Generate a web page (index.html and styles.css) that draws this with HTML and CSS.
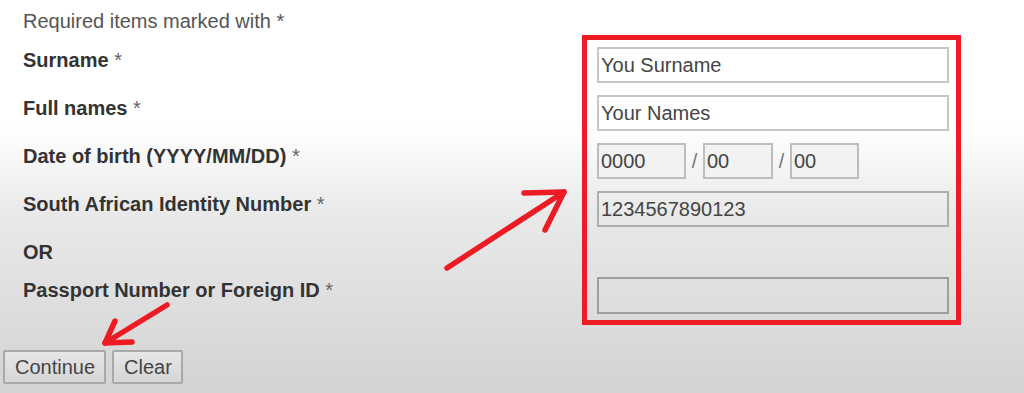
FILE: index.html
```html
<!DOCTYPE html>
<html lang="en">

<head>
  <meta charset="UTF-8" />
  <title>Personal Details</title>
  <meta name="viewport" content="width=device-width, initial-scale=1.0" />
  <link rel="stylesheet" href="styles.css">
</head>

<body>

  <p class="note">Required items marked with *</p>

  <form class="details" onsubmit="return false">
    <div class="labels">
      <label class="label" for="surname">Surname <span class="req">*</span></label>
      <label class="label" for="names">Full names <span class="req">*</span></label>
      <label class="label" for="dob-y">Date of birth (YYYY/MM/DD) <span class="req">*</span></label>
      <label class="label" for="idnum">South African Identity Number <span class="req">*</span></label>
      <div class="label label-or">OR</div>
      <label class="label label-passport" for="passport">Passport Number or Foreign ID <span class="req">*</span></label>
    </div>

    <!-- highlighted input column -->
    <div class="fields">
      <input class="field" id="surname" type="text" value="You Surname">
      <input class="field" id="names" type="text" value="Your Names">
      <div class="dob">
        <input class="field field-year" id="dob-y" type="text" value="0000">
        <span class="slash">/</span>
        <input class="field field-month" type="text" value="00">
        <span class="slash">/</span>
        <input class="field field-day" type="text" value="00">
      </div>
      <input class="field field-grey" id="idnum" type="text" value="1234567890123">
      <input class="field field-grey field-passport" id="passport" type="text" disabled>
    </div>
  </form>

  <div class="actions">
    <button class="btn" type="button">Continue</button>
    <button class="btn" type="button">Clear</button>
  </div>

  <!-- hand-drawn annotation arrows -->
  <svg class="marks" width="1024" height="393" viewBox="0 0 1024 393">
    <g fill="none" stroke="#ed1c24" stroke-width="5.5" stroke-linecap="round" stroke-linejoin="round">
      <path d="M447 268 L564 192" />
      <path d="M524 193 L564 192 L545 230" />
      <path d="M167 305 L105 343" />
      <path d="M115 321 L105 343 L132 342" />
    </g>
  </svg>

</body>

</html>
```

FILE: styles.css
```css
/* ─── BASE ───────────────────────────────────────────────────────── */
* {
  box-sizing: border-box;
  margin: 0;
  padding: 0;
}

html,
body {
  height: 100%;
  overflow: hidden;
}

body {
  position: relative;
  font-family: "Liberation Sans", Arial, sans-serif;
  font-size: 20px;
  line-height: 24px;
  color: #333;
  background: linear-gradient(to bottom, #fff 0, #fff 125px, #e9e9e9 215px, #d3d3d3 393px);
}

.note {
  padding: 9px 0 0 23px;
  color: #555;
}

/* ─── FORM ───────────────────────────────────────────────────────── */
.details {
  display: flex;
  margin-top: 2px;
}

.labels {
  width: 582px;
  padding: 12px 0 0 23px;
  display: flex;
  flex-direction: column;
  gap: 12px;
}

.label {
  display: block;
  height: 36px;
  padding-top: 1px;
  font-weight: bold;
  color: #333;
}

.label-or {
  height: 26px;
}

.label-passport {
  height: 37px;
}

.req {
  font-weight: normal;
  color: #666;
}

/* ─── FIELDS ─────────────────────────────────────────────────────── */
.fields {
  width: 379px;
  border: 5px solid #ed1c24;
  padding: 7px 7px 6px 10px;
  display: flex;
  flex-direction: column;
  gap: 12px;
}

.field {
  display: block;
  width: 100%;
  height: 36px;
  padding: 0 2px;
  font: inherit;
  color: #444;
  background: #fff;
  border: 2px solid #c6c6c6;
  border-radius: 0;
  outline: none;
}

.dob {
  display: flex;
  align-items: center;
  height: 36px;
}

.dob .field {
  background: #f2f2f2;
  border-color: #bdbdbd;
}

.field-year {
  width: 89px;
}

.field-month {
  width: 70px;
}

.field-day {
  width: 69px;
}

.slash {
  width: 17px;
  text-align: center;
  color: #777;
}

.field-grey {
  background: transparent;
  border-color: #aeaeae;
}

.field-passport {
  height: 37px;
  margin-top: 38px;
  border-color: #9e9e9e;
}

/* ─── BUTTONS ────────────────────────────────────────────────────── */
.actions {
  display: flex;
  gap: 6px;
  padding-left: 3px;
  margin-top: 25px;
}

.btn {
  height: 34px;
  padding: 0 10px;
  font: inherit;
  color: #444;
  background: linear-gradient(to bottom, #e6e6e6, #d6d6d6);
  border: 2px solid #a9a9a9;
  border-radius: 2px;
}

.btn:first-child {
  width: 103px;
}

.btn:last-child {
  width: 71px;
}

/* ─── ANNOTATIONS ────────────────────────────────────────────────── */
.marks {
  position: absolute;
  top: 0;
  left: 0;
  pointer-events: none;
}
```
